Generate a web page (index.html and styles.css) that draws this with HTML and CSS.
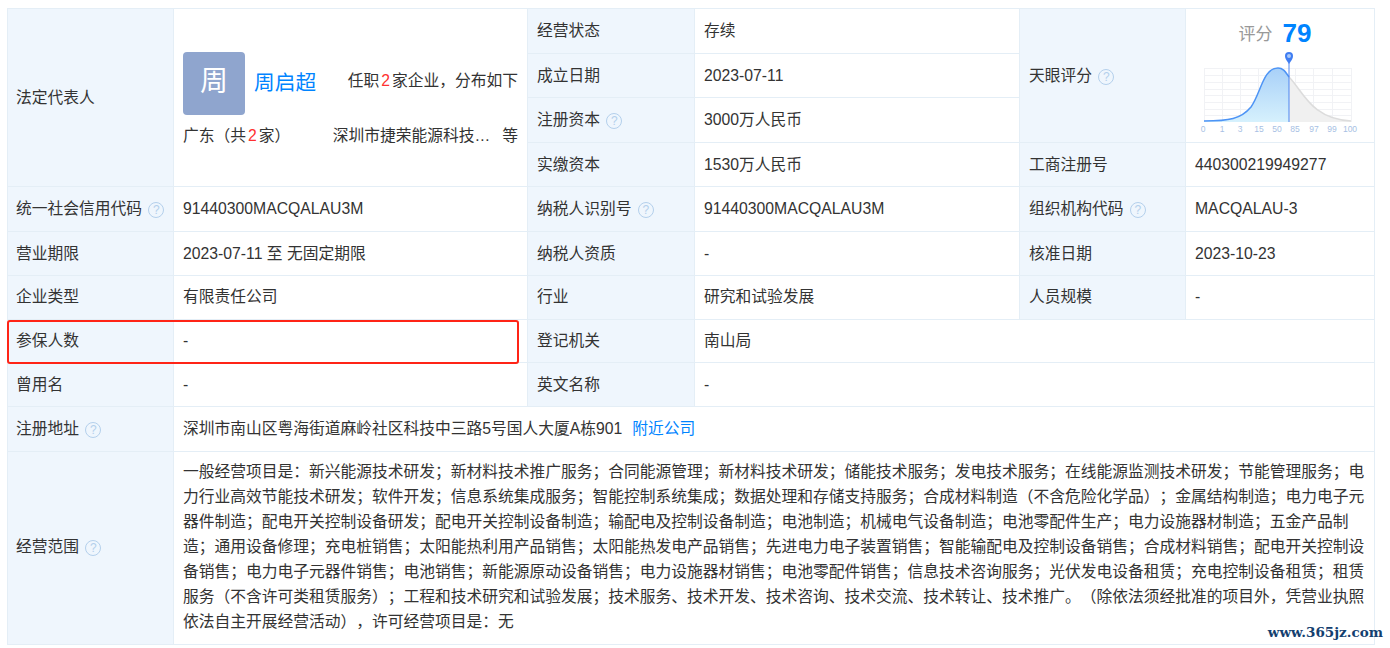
FILE: index.html
```html
<!DOCTYPE html>
<html lang="zh-CN">
<head>
    <meta charset="UTF-8">
    <meta name="viewport" content="width=device-width, initial-scale=1.0">
    <title>工商信息</title>
    <link rel="stylesheet" href="styles.css">
</head>
<body>
    <div class="info-wrap">
        <table class="info-table">
            <colgroup>
                <col class="col-a"><col class="col-b"><col class="col-c"><col class="col-d"><col class="col-e"><col class="col-f">
            </colgroup>
            <tr>
                <td class="label first" rowspan="4">法定代表人</td>
                <td class="legal" rowspan="4">
                    <div class="legal-top">
                        <div class="avatar">周</div>
                        <a class="legal-name">周启超</a>
                        <span class="legal-count">任职<em>2</em>家企业，分布如下</span>
                    </div>
                    <div class="legal-bottom">
                        <span>广东（共<em>2</em>家）</span>
                        <span class="legal-company">深圳市捷荣能源科技…</span>
                        <span>等</span>
                    </div>
                </td>
                <td class="label">经营状态</td>
                <td>存续</td>
                <td class="label" rowspan="3">天眼评分 <i class="help">?</i></td>
                <td class="score" rowspan="3">
                    <div class="score-title">评分<b>79</b></div>
                    <svg class="score-chart" width="160" height="84" viewBox="0 0 160 84">
                        <g stroke="#f1f2f5" stroke-width="1" fill="none">
                            <path d="M5.5 17.500H152.500M5.500 24.500H152.500M5.500 31.500H152.500M5.500 38.500H152.500M5.500 44.500H152.500M5.500 51.500H152.500M5.500 58.500H152.500M5.500 64.500H152.500"/>
                            <path d="M5.500 17V71M23.500 17V71M41.500 17V71M59.500 17V71M78.500 17V71M96.500 17V71M114.500 17V71M133.500 17V71M152.500 17V71"/>
                        </g>
                        <defs>
                            <linearGradient id="fillBlue" x1="0" y1="0" x2="0" y2="1">
                                <stop offset="0" stop-color="#a8d0f8"/>
                                <stop offset="1" stop-color="#d6f1fd"/>
                            </linearGradient>
                        </defs>
                        <path d="M90 26C104 40 112 68 152 70V71H90Z" fill="#f0f0f0"/>
                        <path d="M90 26C104 40 112 68 152 70" fill="none" stroke="#dcdcdc" stroke-width="1.500"/>
                        <path d="M5 70C30 70 42 68 52 56C62 42 64 17 79 17C85 17 87 22 90 26V71H5Z" fill="url(#fillBlue)"/>
                        <path d="M5 70C30 70 42 68 52 56C62 42 64 17 79 17C85 17 87 22 90 26" fill="none" stroke="#4d94f5" stroke-width="1.500"/>
                        <path d="M90 12V71" stroke="#4c84f0" stroke-width="1"/>
                        <path d="M90 13C87 9 86 7 86 5A4 4 0 0 1 94 5C94 7 93 9 90 13Z" fill="#3f7df2"/>
                        <circle cx="90" cy="5" r="2" fill="#a9c8f8"/>
                        <g class="tick">
                            <text x="4" y="81">0</text><text x="23" y="81">1</text><text x="41" y="81">3</text><text x="60" y="81">15</text><text x="78" y="81">50</text><text x="96" y="81">85</text><text x="115" y="81">97</text><text x="133" y="81">99</text><text x="151" y="81">100</text>
                        </g>
                    </svg>
                </td>
            </tr>
            <tr>
                <td class="label">成立日期</td>
                <td>2023-07-11</td>
            </tr>
            <tr>
                <td class="label">注册资本 <i class="help">?</i></td>
                <td>3000万人民币</td>
            </tr>
            <tr>
                <td class="label">实缴资本</td>
                <td>1530万人民币</td>
                <td class="label">工商注册号</td>
                <td>440300219949277</td>
            </tr>
            <tr>
                <td class="label first">统一社会信用代码 <i class="help">?</i></td>
                <td>91440300MACQALAU3M</td>
                <td class="label">纳税人识别号 <i class="help">?</i></td>
                <td>91440300MACQALAU3M</td>
                <td class="label">组织机构代码 <i class="help">?</i></td>
                <td>MACQALAU-3</td>
            </tr>
            <tr>
                <td class="label first">营业期限</td>
                <td>2023-07-11 至 无固定期限</td>
                <td class="label">纳税人资质</td>
                <td>-</td>
                <td class="label">核准日期</td>
                <td>2023-10-23</td>
            </tr>
            <tr class="row-low">
                <td class="label first">企业类型</td>
                <td>有限责任公司</td>
                <td class="label">行业</td>
                <td>研究和试验发展</td>
                <td class="label">人员规模</td>
                <td>-</td>
            </tr>
            <tr class="row-low">
                <td class="label first">参保人数</td>
                <td>-</td>
                <td class="label">登记机关</td>
                <td colspan="3">南山局</td>
            </tr>
            <tr class="row-low">
                <td class="label first">曾用名</td>
                <td>-</td>
                <td class="label">英文名称</td>
                <td colspan="3">-</td>
            </tr>
            <tr>
                <td class="label first">注册地址 <i class="help">?</i></td>
                <td colspan="5">深圳市南山区粤海街道麻岭社区科技中三路5号国人大厦A栋901<a class="nearby">附近公司</a></td>
            </tr>
            <tr>
                <td class="label first scope-label">经营范围 <i class="help">?</i></td>
                <td class="scope" colspan="5">一般经营项目是：新兴能源技术研发；新材料技术推广服务；合同能源管理；新材料技术研发；储能技术服务；发电技术服务；在线能源监测技术研发；节能管理服务；电力行业高效节能技术研发；软件开发；信息系统集成服务；智能控制系统集成；数据处理和存储支持服务；合成材料制造（不含危险化学品）；金属结构制造；电力电子元器件制造；配电开关控制设备研发；配电开关控制设备制造；输配电及控制设备制造；电池制造；机械电气设备制造；电池零配件生产；电力设施器材制造；五金产品制造；通用设备修理；充电桩销售；太阳能热利用产品销售；太阳能热发电产品销售；先进电力电子装置销售；智能输配电及控制设备销售；合成材料销售；配电开关控制设备销售；电力电子元器件销售；电池销售；新能源原动设备销售；电力设施器材销售；电池零配件销售；信息技术咨询服务；光伏发电设备租赁；充电控制设备租赁；租赁服务（不含许可类租赁服务）；工程和技术研究和试验发展；技术服务、技术开发、技术咨询、技术交流、技术转让、技术推广。（除依法须经批准的项目外，凭营业执照依法自主开展经营活动），许可经营项目是：无</td>
            </tr>
        </table>
        <div class="mark-box"></div>
        <div class="watermark">www.365jz.com</div>
    </div>
</body>
</html>
```

FILE: styles.css
```css
html, body {
    margin: 0;
    padding: 0;
    background: #fff;
    overflow: hidden;
}
body {
    font-family: "Liberation Sans", "Noto Sans CJK SC", sans-serif;
    font-size: 15.750px;
    color: #333;
    text-spacing-trim: space-all;
}
.info-wrap {
    position: relative;
    width: 1390px;
    height: 648px;
    padding: 8px 0 0 7px;
    box-sizing: border-box;
}
.info-table {
    width: 1367px;
    table-layout: fixed;
    border-collapse: collapse;
}
.col-a { width: 166px; }
.col-b { width: 354px; }
.col-c { width: 167px; }
.col-d { width: 325px; }
.col-e { width: 166px; }
.col-f { width: 189px; }
.info-table tr { height: 44.500px; }
.info-table tr.row-low { height: 43.700px; }
.info-table td {
    border: 1px solid #e4eef6;
    padding: 1px 9px 0;
    line-height: 20px;
    vertical-align: middle;
}
.info-table tr.row-low td {
    padding-top: 0;
}
.info-table td.label {
    background: #eff6fd;
    white-space: nowrap;
}
.info-table td.label.first {
    padding-left: 8px;
}
.info-table td.scope-label {
    padding-bottom: 3px;
}
.help {
    display: inline-block;
    width: 14px;
    height: 14px;
    margin-left: 2px;
    border: 1px solid #b4d0ec;
    border-radius: 50%;
    color: #b4d0ec;
    font-size: 12px;
    font-style: normal;
    line-height: 14px;
    text-align: center;
    vertical-align: 0;
}
em {
    font-style: normal;
    color: #ff3030;
    margin: 0 2px;
}
.legal-top {
    display: flex;
    align-items: center;
    margin-top: 1px;
}
.avatar {
    width: 62px;
    height: 63px;
    border-radius: 4px;
    background: #8fa5ce;
    color: #fff;
    font-size: 28px;
    line-height: 60px;
    text-align: center;
}
.legal-name {
    margin-left: 9px;
    color: #0084ff;
    font-size: 20.700px;
}
.legal-count {
    margin-left: auto;
    margin-top: -4px;
}
.legal-bottom {
    display: flex;
    margin-top: 11px;
}
.legal-company {
    margin-left: auto;
    margin-right: 12px;
}
.score {
    text-align: center;
}
.score-title {
    color: #999;
    font-size: 17px;
    line-height: 26px;
    margin: 4px 10px 0 0;
}
.score-title b {
    margin-left: 10px;
    color: #0084ff;
    font-size: 26px;
    vertical-align: -2px;
}
.score-chart {
    display: block;
    margin: 3px 0 0 4px;
}
.tick text {
    fill: #a8bfe4;
    font-size: 8.500px;
    text-anchor: middle;
}
.nearby {
    margin-left: 10px;
    color: #0084ff;
}
.info-table td.scope {
    padding: 7px 9px 10px;
    line-height: 25px;
}
.mark-box {
    position: absolute;
    left: 7px;
    top: 320px;
    width: 508px;
    height: 40px;
    border: 2px solid #ff2416;
    border-radius: 3px;
}
.watermark {
    position: absolute;
    right: 7px;
    bottom: 8px;
    color: #14406f;
    font-family: "DejaVu Serif", serif;
    font-size: 13.500px;
    font-weight: bold;
}
```
